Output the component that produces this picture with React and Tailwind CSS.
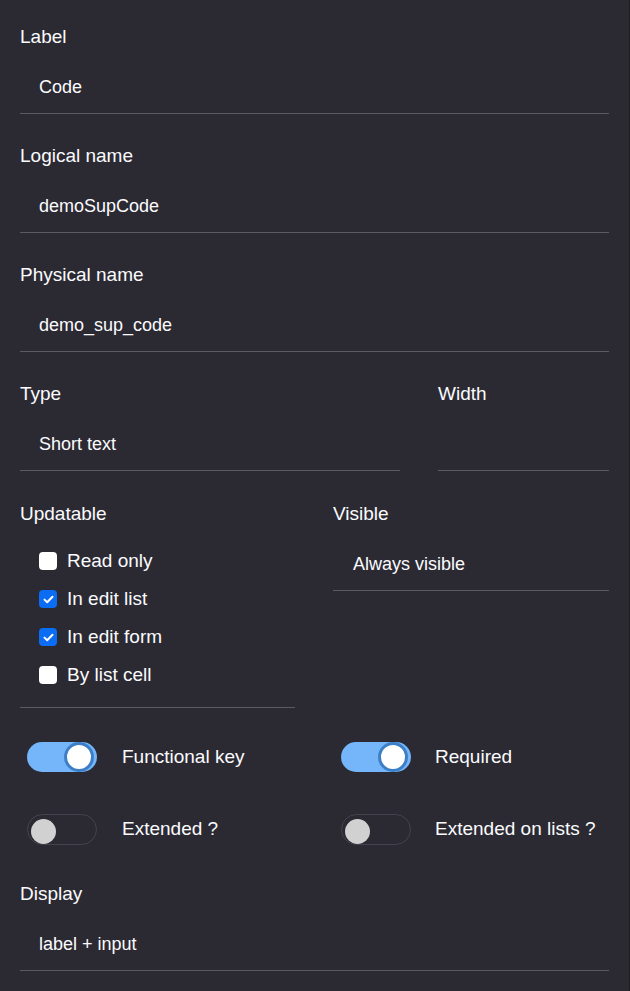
import React from 'react';

const font = { fontFamily: '"Liberation Sans", Arial, sans-serif' };

const Field = ({ label, value, className = '' }) => (
  <div className={className}>
    <div className="h-6 text-[19px] leading-6">{label}</div>
    <div className="mt-[26px] h-[39px] pl-[19px] border-b border-[#5b5a63] text-[18px] leading-6">
      {value}
    </div>
  </div>
);

const Checkbox = ({ checked, label }) => (
  <div className="flex items-center h-[38px] pl-[19px]">
    {checked ? (
      <span className="w-[18px] h-[18px] rounded-[4px] bg-[#0b6cf4] flex items-center justify-center">
        <svg width="11" height="9" viewBox="0 0 11 9" fill="none">
          <path
            d="M1.5 4.6 4.2 7.2 9.5 1.8"
            stroke="white"
            strokeWidth="2"
            strokeLinecap="round"
            strokeLinejoin="round"
          />
        </svg>
      </span>
    ) : (
      <span className="w-[18px] h-[18px] rounded-[4px] bg-white" />
    )}
    <span className="ml-[10px] text-[19px] leading-6">{label}</span>
  </div>
);

const Toggle = ({ on }) =>
  on ? (
    <span className="relative block w-[70px] h-[30px] rounded-full bg-[#75b6fb]">
      <span className="absolute right-[3px] top-0 w-[30px] h-[30px] rounded-full bg-white border-[3px] border-[#3c7fc6]" />
    </span>
  ) : (
    <span className="relative block w-[70px] h-[31px] rounded-full border border-[#44434d]">
      <span className="absolute left-[3px] top-[4px] w-[25px] h-[25px] rounded-full bg-[#d1d1d1]" />
    </span>
  );

const ToggleItem = ({ on, label, offset, gap }) => (
  <div className="flex items-center h-[30px]">
    <div className={offset}>
      <Toggle on={on} />
    </div>
    <span className={`${gap} text-[19px] leading-6`}>{label}</span>
  </div>
);

const App = () => {
  return (
    <div
      className="min-h-[991px] bg-[#2b2a33] text-[#fbfbfe] pl-5 pr-[20px] pt-[25px] border-r border-[#1c1b22]"
      style={font}
    >
      <Field label="Label" value="Code" />
      <Field className="mt-[30px]" label="Logical name" value="demoSupCode" />
      <Field className="mt-[30px]" label="Physical name" value="demo_sup_code" />
      <div className="mt-[30px] grid grid-cols-[380px_1fr] gap-x-[38px]">
        <Field label="Type" value="Short text" />
        <Field label="Width" value="" />
      </div>
      <div className="mt-[31px] grid grid-cols-[275px_1fr] gap-x-[38px] items-start">
        <div>
          <div className="h-6 text-[19px] leading-6">Updatable</div>
          <div className="mt-4 pb-[13px] border-b border-[#5b5a63]">
            <Checkbox label="Read only" />
            <Checkbox checked label="In edit list" />
            <Checkbox checked label="In edit form" />
            <Checkbox label="By list cell" />
          </div>
        </div>
        <div>
          <div className="h-6 text-[19px] leading-6">Visible</div>
          <div className="mt-[26px] h-[39px] pl-5 border-b border-[#5b5a63] text-[18px] leading-6">
            Always visible
          </div>
        </div>
      </div>
      <div className="mt-[34px] grid grid-cols-[275px_1fr] gap-x-[38px] gap-y-[42px]">
        <ToggleItem on label="Functional key" offset="ml-[7px]" gap="ml-[25px]" />
        <ToggleItem on label="Required" offset="ml-[8px]" gap="ml-[24px]" />
        <ToggleItem label="Extended ?" offset="ml-[7px]" gap="ml-[25px]" />
        <ToggleItem label="Extended on lists ?" offset="ml-[8px]" gap="ml-[24px]" />
      </div>
      <Field className="mt-[38px]" label="Display" value="label + input" />
    </div>
  );
};

export default App;
